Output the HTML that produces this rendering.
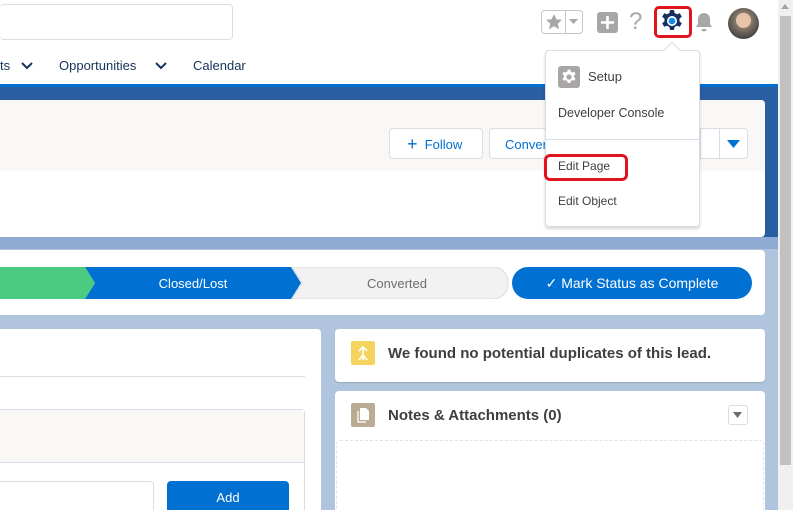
<!DOCTYPE html>
<html><head><style>
*{margin:0;padding:0;box-sizing:border-box}
html,body{width:793px;height:510px;overflow:hidden}
body{position:relative;background:#b0c4de;font-family:"Liberation Sans",sans-serif;color:#16325c;font-size:13px}
.a{position:absolute}
</style></head><body>
<div class="a" style="left:0;top:0;width:778px;height:84px;background:#fff"></div>
<div class="a" style="left:0;top:4px;width:233px;height:36px;border:1px solid #d8dde6;border-radius:4px;border-left:none"></div>
<div class="a" style="left:0;top:58px;font-size:13px;color:#16325c">ts</div>
<svg class="a" style="left:20px;top:61px" width="14" height="10"><path d="M2 2l5 5 5-5" stroke="#16325c" stroke-width="2" fill="none"/></svg>
<div class="a" style="left:59px;top:58px">Opportunities</div>
<svg class="a" style="left:154px;top:61px" width="14" height="10"><path d="M2 2l5 5 5-5" stroke="#16325c" stroke-width="2" fill="none"/></svg>
<div class="a" style="left:193px;top:58px">Calendar</div>
<div class="a" style="left:0;top:84px;width:778px;height:3px;background:#0070d2"></div>
<div class="a" style="left:0;top:87px;width:778px;height:150px;background:#2a5ea2"></div>
<div class="a" style="left:0;top:237px;width:778px;height:12px;background:#8fabd3"></div>
<div class="a" style="left:0;top:100px;width:765px;height:137px;background:#fff;border-radius:0 4px 4px 0"></div>
<div class="a" style="left:0;top:100px;width:765px;height:71px;background:#f9f8f7;border-radius:0 4px 0 0"></div>
<div class="a" style="left:389px;top:128px;width:94px;height:31px;border:1px solid #d8dde6;border-radius:4px;background:#fff;color:#0070d2;padding:7px 0 0 17px"><span style="font-size:18px;line-height:14px;position:relative;top:1px">+</span>&nbsp; Follow</div>
<div class="a" style="left:489px;top:128px;width:70px;height:31px;border:1px solid #d8dde6;border-right:none;border-radius:4px 0 0 4px;background:#fff;color:#0070d2;padding:8px 0 0 15px">Conver</div>
<div class="a" style="left:700px;top:128px;width:48px;height:31px;border:1px solid #d8dde6;border-radius:0 4px 4px 0;background:#fff"></div>
<div class="a" style="left:719px;top:128px;width:1px;height:31px;background:#d8dde6"></div>
<svg class="a" style="left:727px;top:140px" width="14" height="9"><path d="M0 0h13L6.5 8z" fill="#0070d2"/></svg>
<div class="a" style="left:0;top:250px;width:765px;height:65px;background:#fff;border-radius:0 4px 4px 0"></div>
<svg class="a" style="left:0;top:267px" width="510" height="32">
<path d="M0 0H85L95 16 85 32H0z" fill="#4bca81"/>
<path d="M85 0H291L301 16 291 32H85L95 16z" fill="#0070d2"/>
<path d="M292 0H493A15 15 0 0 1 508 16 15 15 0 0 1 493 32H292L302 16z" fill="#f2f2f3" stroke="#dddbda"/>
</svg>
<div class="a" style="left:85px;top:276px;width:216px;text-align:center;color:#fff">Closed/Lost</div>
<div class="a" style="left:297px;top:276px;width:200px;text-align:center;color:#706e6b">Converted</div>
<div class="a" style="left:512px;top:267px;width:240px;height:32px;background:#0070d2;border-radius:16px;color:#fff;font-size:14px;padding-top:8px;text-align:center">✓ Mark Status as Complete</div>
<div class="a" style="left:0;top:329px;width:321px;height:190px;background:#fff;border-radius:0 4px 0 0"></div>
<div class="a" style="left:0;top:376px;width:305px;height:1px;background:#d8dde6"></div>
<div class="a" style="left:0;top:409px;width:305px;height:110px;border:1px solid #d8dde6;border-left:none;border-radius:0 4px 0 0;background:#fff"></div>
<div class="a" style="left:0;top:410px;width:304px;height:53px;background:#f9f8f7;border-bottom:1px solid #d8dde6"></div>
<div class="a" style="left:0;top:481px;width:154px;height:40px;border:1px solid #d8dde6;border-left:none;border-radius:0 4px 0 0"></div>
<div class="a" style="left:167px;top:481px;width:122px;height:40px;background:#0070d2;border-radius:4px;color:#fff;text-align:center;padding-top:9px">Add</div>
<div class="a" style="left:335px;top:329px;width:430px;height:53px;background:#fff;border-radius:4px;box-shadow:0 1px 1px rgba(0,0,0,.15)"></div>
<div class="a" style="left:351px;top:341px;width:24px;height:24px;background:#f4d35e;border-radius:2px"></div>
<svg class="a" style="left:355px;top:344px" width="16" height="18"><path d="M8 2v14M4 7l4-4 4 4M4 16l4-5 4 5" stroke="#fff" stroke-width="1.6" fill="none"/></svg>
<div class="a" style="left:388px;top:345px;font-size:15px;font-weight:bold;color:#3e3e3c">We found no potential duplicates of this lead.</div>
<div class="a" style="left:335px;top:391px;width:430px;height:130px;background:#fff;border-radius:4px"></div>
<div class="a" style="left:351px;top:403px;width:24px;height:24px;background:#baac93;border-radius:2px"></div>
<svg class="a" style="left:355px;top:406px" width="16" height="18"><path d="M5 2h6l3 3v9H5z" fill="#fff"/><path d="M3 5v11h8" stroke="#fff" stroke-width="1.3" fill="none"/></svg>
<div class="a" style="left:388px;top:407px;font-size:15px;font-weight:bold;color:#3e3e3c">Notes &amp; Attachments (0)</div>
<div class="a" style="left:728px;top:405px;width:20px;height:20px;border:1px solid #d8dde6;border-radius:3px"></div>
<svg class="a" style="left:733px;top:412px" width="10" height="7"><path d="M0 0h9L4.5 6z" fill="#706e6b"/></svg>
<div class="a" style="left:336px;top:440px;width:428px;height:80px;border:1px dashed #e0e3e8;border-radius:4px"></div>
<div class="a" style="left:778px;top:0;width:15px;height:510px;background:#f0f0f0"></div>
<div class="a" style="left:780px;top:16px;width:11px;height:449px;background:#c1c1c1"></div>
<svg class="a" style="left:781px;top:4px" width="9" height="6"><path d="M0 5h8L4 0z" fill="#a3a3a3"/></svg>
<div class="a" style="left:541px;top:10px;width:42px;height:24px;border:1px solid #c9c7c5;border-radius:4px;background:#fff"></div>
<div class="a" style="left:565px;top:10px;width:1px;height:24px;background:#c9c7c5"></div>
<svg class="a" style="left:544px;top:12px" width="20" height="20"><path d="M10 2l2.4 5.2 5.6.6-4.2 3.8 1.2 5.6L10 14.3 5 17.2l1.2-5.6L2 7.8l5.6-.6z" fill="#a8a7a5"/></svg>
<svg class="a" style="left:569px;top:19px" width="10" height="6"><path d="M0 0h9L4.5 5z" fill="#a8a7a5"/></svg>
<div class="a" style="left:597px;top:12px;width:21px;height:21px;background:#a8a7a5;border-radius:3px"></div>
<svg class="a" style="left:597px;top:12px" width="21" height="21"><path d="M10.5 4v13M4 10.5h13" stroke="#fff" stroke-width="2.6"/></svg>
<div class="a" style="left:629px;top:8px;font-size:24px;color:#a8a7a5">?</div>
<div class="a" style="left:654px;top:6px;width:38px;height:32px;border:3px solid #e0141e;border-radius:5px"></div>
<svg class="a" style="left:660px;top:9px" width="24" height="24" viewBox="0 0 24 24"><path d="M10 1h4l.6 3 2.3 1.3 2.9-1 2 3.4-2.3 2v2.6l2.3 2-2 3.4-2.9-1-2.3 1.3-.6 3h-4l-.6-3-2.3-1.3-2.9 1-2-3.4 2.3-2v-2.6l-2.3-2 2-3.4 2.9 1L9.4 4z" fill="#16325c"/><circle cx="12" cy="12" r="5" fill="#fff"/><circle cx="12" cy="12" r="3.3" fill="#1589ee"/></svg>
<svg class="a" style="left:694px;top:11px" width="20" height="22"><path d="M10 2a6 6 0 0 0-6 6v5l-2 3h16l-2-3V8a6 6 0 0 0-6-6zM7.5 18a2.5 2.5 0 0 0 5 0z" fill="#a8a7a5"/></svg>
<div class="a" style="left:728px;top:8px;width:31px;height:31px;border-radius:50%;background:radial-gradient(circle at 50% 40%,#e8c3a8 0 30%,#8a7a6a 32%,#4a4a4a 70%,#2a3a2a)"></div>
<div class="a" style="left:545px;top:50px;width:155px;height:177px;background:#fff;border:1px solid #d8dde6;border-radius:4px;box-shadow:0 2px 3px rgba(0,0,0,.16)"></div>
<div class="a" style="left:666px;top:44px;width:12px;height:12px;background:#fff;border-left:1px solid #d8dde6;border-top:1px solid #d8dde6;transform:rotate(45deg)"></div>
<div class="a" style="left:558px;top:66px;width:22px;height:22px;background:#a8a7a5;border-radius:3px"></div>
<svg class="a" style="left:561px;top:69px" width="16" height="16" viewBox="0 0 24 24"><path d="M10 1h4l.6 3 2.3 1.3 2.9-1 2 3.4-2.3 2v2.6l2.3 2-2 3.4-2.9-1-2.3 1.3-.6 3h-4l-.6-3-2.3-1.3-2.9 1-2-3.4 2.3-2v-2.6l-2.3-2 2-3.4 2.9 1L9.4 4z" fill="#fff"/><circle cx="12" cy="12" r="4" fill="#a8a7a5"/></svg>
<div class="a" style="left:588px;top:69px;color:#3e3e3c;font-size:13px">Setup</div>
<div class="a" style="left:558px;top:106px;color:#3e3e3c;font-size:12.5px">Developer Console</div>
<div class="a" style="left:546px;top:139px;width:153px;height:1px;background:#d8dde6"></div>
<div class="a" style="left:544px;top:154px;width:84px;height:27px;border:3px solid #e0141e;border-radius:6px"></div>
<div class="a" style="left:558px;top:159px;color:#3e3e3c;font-size:12px">Edit Page</div>
<div class="a" style="left:558px;top:194px;color:#3e3e3c;font-size:12px">Edit Object</div>
</body></html>
